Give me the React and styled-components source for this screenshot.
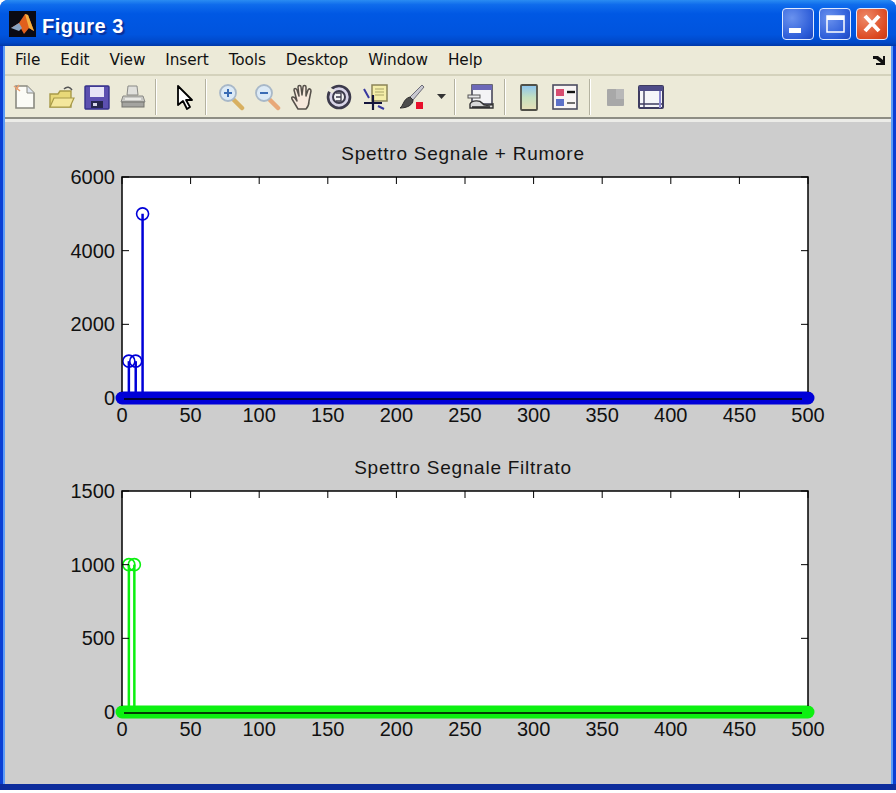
import React from "react";
import styled, { createGlobalStyle } from "styled-components";

const GlobalStyle = createGlobalStyle`
  html, body { margin: 0; padding: 0; background: #fff; }
  body { font-family: "Liberation Sans", Arial, sans-serif; }
`;

const Win = styled.div`
  width: 896px;
  height: 790px;
  display: flex;
  flex-direction: column;
  box-sizing: border-box;
  background: #0a3fd4;
  border-radius: 8px 8px 0 0;
  border-bottom: 6px solid #0c2c9c;
  overflow: hidden;
`;

const TitleBar = styled.div`
  height: 46px;
  flex: none;
  display: flex;
  align-items: center;
  padding: 2px 8px 0 9px;
  box-sizing: border-box;
  background: linear-gradient(180deg, #2a8cf2 0%, #0f6cec 10%, #0058e4 30%, #0054de 75%, #0048c8 92%, #0038a8 100%);
`;

const TitleText = styled.span`
  margin: 4px 0 0 6px;
  color: #fff;
  font-weight: 700;
  font-size: 20px;
  letter-spacing: 0.5px;
  text-shadow: 2px 2px 1px #0a2f98;
`;

const WinButtons = styled.div`
  margin-left: auto;
  display: flex;
  gap: 5px;
`;

const WinButton = styled.div`
  width: 32px;
  height: 32px;
  box-sizing: border-box;
  border: 1px solid #dfeaff;
  border-radius: 4px;
  display: flex;
  align-items: center;
  justify-content: center;
  background: ${(props) =>
    props.$close
      ? "radial-gradient(circle at 30% 30%, #ee8a68, #dc4a22 70%, #c83a18)"
      : "radial-gradient(circle at 30% 30%, #6a92ee, #2c5cd8 70%, #1c46c0)"};
`;

const Client = styled.div`
  flex: 1;
  min-height: 0;
  margin: 0 3px;
  display: flex;
  flex-direction: column;
  background: #cdcdcd;
  border-left: 2px solid #5c9cf8;
  border-right: 2px solid #5c9cf8;
`;

const MenuBar = styled.div`
  height: 30px;
  flex: none;
  box-sizing: border-box;
  display: flex;
  align-items: center;
  padding-left: 10px;
  gap: 20px;
  background: #ecead8;
  border-bottom: 2px solid #d4d2bc;
`;

const MenuItem = styled.span`
  font-family: "DejaVu Sans", sans-serif;
  font-size: 15.3px;
  letter-spacing: -0.1px;
  color: #111;
`;

const DockArrow = styled.span`
  margin-left: auto;
  margin-right: 6px;
  display: flex;
`;

const Toolbar = styled.div`
  height: 43px;
  flex: none;
  box-sizing: border-box;
  display: flex;
  align-items: center;
  padding-left: 2px;
  background: #ecead8;
  border-bottom: 2px solid #8e8e84;
`;

const ToolButton = styled.div`
  width: ${(props) => props.$w || 36}px;
  height: 36px;
  flex: none;
  display: flex;
  align-items: center;
  justify-content: center;
`;

const Separator = styled.div`
  width: 2px;
  height: 36px;
  flex: none;
  margin: 0 ${(props) => props.$r}px 0 ${(props) => props.$l}px;
  background: #b4b2a0;
  border-right: 1px solid #fff;
  box-sizing: border-box;
`;

const Figure = styled.div`
  flex: 1;
  display: flex;
  flex-direction: column;
  gap: 20px;
  padding-top: 21px;
  border-top: 3px solid #ecece8;
`;

const Plot = styled.div`
  display: flex;
  flex-direction: column;
`;

const PlotTitle = styled.div`
  height: 22px;
  line-height: 22px;
  padding-left: 115px;
  width: 686px;
  text-align: center;
  font-size: 19px;
  letter-spacing: 0.75px;
  color: #151515;
`;

const TickLabel = styled.text`
  font-family: "Liberation Sans", Arial, sans-serif;
  font-size: 20px;
  fill: #111;
`;

/* chart */
const AX = { left: 117, width: 686, top: 12, height: 221 };

const Axes = ({ color, yMax, yTicks, peaks }) => {
  const px = (v) => AX.left + (v / 500) * AX.width;
  const py = (v) => AX.top + AX.height - (v / yMax) * AX.height;
  const xTicks = [0, 50, 100, 150, 200, 250, 300, 350, 400, 450, 500];
  const right = AX.left + AX.width;
  const bottom = AX.top + AX.height;
  return (
    <svg width="886" height="272" style={{ display: "block" }}>
      <rect x={AX.left} y={AX.top} width={AX.width} height={AX.height} fill="#fff" />
      {peaks.map(([x, y]) => (
        <g key={x}>
          <line x1={px(x)} x2={px(x)} y1={py(y)} y2={bottom} stroke={color} strokeWidth="2.5" />
          <circle cx={px(x)} cy={py(y)} r="6" fill="none" stroke={color} strokeWidth="1.6" />
        </g>
      ))}
      {/* the 500 markers at zero overlap into one solid band */}
      <line x1={AX.left} x2={right} y1={bottom} y2={bottom} stroke={color} strokeWidth="13" strokeLinecap="round" />
      <path d={`M${AX.left} ${bottom - 6}V${AX.top}H${right}V${bottom - 6}`} fill="none" stroke="#000" strokeWidth="1.5" />
      <line x1={AX.left + 2} x2={right - 6} y1={bottom + 1} y2={bottom + 1} stroke="#000" strokeWidth="1.5" />
      {xTicks.map((t) => (
        <g key={t}>
          <line x1={px(t)} x2={px(t)} y1={AX.top} y2={AX.top + 7} stroke="#000" />
          <TickLabel x={px(t)} y={bottom + 24} textAnchor="middle">{t}</TickLabel>
        </g>
      ))}
      {yTicks.map((t) => (
        <g key={t}>
          {t > 0 && <line x1={AX.left} x2={AX.left + 7} y1={py(t)} y2={py(t)} stroke="#000" />}
          {t > 0 && <line x1={right} x2={right - 7} y1={py(t)} y2={py(t)} stroke="#000" />}
          <TickLabel x={AX.left - 7} y={py(t) + 7} textAnchor="end">{t}</TickLabel>
        </g>
      ))}
    </svg>
  );
};

/* icons */
const Ico = ({ children, w = 28, h = 28 }) => (
  <svg width={w} height={h} viewBox="0 0 28 28">{children}</svg>
);

const MatlabLogo = () => (
  <svg width="27" height="26" viewBox="0 0 27 26">
    <rect width="27" height="26" fill="#0a0a14" />
    <path d="M2 17l8-5 6-9 3 1 6 16-5-3-5 6-4-7z" fill="#e0601c" />
    <path d="M2 17l8-5 3 5-3 3z" fill="#8aa4c4" />
    <path d="M16 3l3 1 6 16-5-3z" fill="#f4b040" />
  </svg>
);

const NewIcon = () => (
  <Ico>
    <path d="M5 3h11l7 7v15H5z" fill="#fbfbf6" stroke="#8a8a80" strokeWidth="1.6" />
    <path d="M16 3v7h7" fill="#dfe6f0" stroke="#8a8a80" />
    <path d="M3 3l6 5M8 2l-3 5" stroke="#e8a070" strokeWidth="1.5" />
  </Ico>
);

const OpenIcon = () => (
  <Ico>
    <path d="M3 11h8l2-3h11v16H3z" fill="#e8d878" stroke="#a89a48" strokeWidth="1.4" />
    <path d="M3 24l4-9h20l-4 9z" fill="#f4e79c" stroke="#a89a48" strokeWidth="1.2" />
    <path d="M17 6c3-3 6-2 8 1" fill="none" stroke="#555" strokeWidth="1.5" />
  </Ico>
);

const SaveIcon = () => (
  <Ico>
    <rect x="2" y="3" width="24" height="23" rx="1" fill="#5c50b0" stroke="#34308a" strokeWidth="1.4" />
    <rect x="7" y="4" width="14" height="10" fill="#e6e4f6" />
    <rect x="8" y="18" width="12" height="7" fill="#26264c" />
    <rect x="10" y="20" width="4" height="3" fill="#d8d8e8" />
  </Ico>
);

const PrintIcon = () => (
  <Ico>
    <path d="M9 3h9l1 9H8z" fill="#e0e0dc" stroke="#8a8a86" />
    <path d="M4 13h20l2 6H2z" fill="#c8c8c4" stroke="#8a8a86" />
    <rect x="3" y="19" width="22" height="5" fill="#a4a4a0" stroke="#74746f" />
    <path d="M6 16h16" stroke="#f4f4f0" strokeWidth="1.5" />
  </Ico>
);

const ArrowIcon = () => (
  <Ico>
    <path d="M8 3v19l5-4 4 8 3-2-4-7h6z" fill="#fff" stroke="#000" strokeWidth="1.8" strokeLinejoin="round" />
  </Ico>
);

const ZoomIcon = ({ minus }) => (
  <Ico>
    <path d="M16 16l9 9" stroke={minus ? "#e8a878" : "#d8b060"} strokeWidth="4.5" strokeLinecap="round" />
    <circle cx="11" cy="10" r="8" fill="#dceaf6" stroke="#a8b8c8" strokeWidth="1.8" />
    <path d={minus ? "M7 10h8" : "M7 10h8M11 6v8"} stroke="#3a6cb4" strokeWidth="2" />
  </Ico>
);

const HandIcon = () => (
  <Ico>
    <path
      d="M9 26l-6-10c-1-2 1-3 3-1l2 3-3-11c0-2 2-2 3 0l2 6-1-9c0-2 3-2 3 0l1 8 1-8c0-2 3-2 3 0l0 9 2-6c1-2 3-1 3 1l-2 10c0 4-2 7-3 8z"
      fill="#f6e8dc"
      stroke="#55504a"
      strokeWidth="1.5"
      strokeLinejoin="round"
    />
  </Ico>
);

const RotateIcon = () => (
  <Ico>
    <circle cx="14" cy="14" r="11" fill="#d8d4e8" stroke="#3c3a4c" strokeWidth="2.6" />
    <path d="M2 5l7 4" stroke="#eceadc" strokeWidth="4" />
    <circle cx="14" cy="14" r="6" fill="#f4f4f4" stroke="#3c3a4c" strokeWidth="2" />
    <path d="M11 10h5v8h-5M11 14h5" fill="none" stroke="#3c3a4c" strokeWidth="1.3" />
  </Ico>
);

const CursorIcon = () => (
  <Ico>
    <rect x="11" y="2" width="15" height="16" fill="#f4eda8" stroke="#8a8458" strokeWidth="1.5" />
    <path d="M14 6h9M14 9h9M14 12h9" stroke="#a8a468" />
    <path d="M12 12v15M3 20h18" stroke="#14143c" strokeWidth="2.2" />
    <path d="M3 6l5 9M17 23l6 3" stroke="#3838a0" strokeWidth="2" />
  </Ico>
);

const BrushIcon = () => (
  <Ico>
    <path d="M25 2l2 2-11 13-3-3z" fill="#c8c8d0" stroke="#6c6c78" />
    <path d="M13 14l3 3c0 5-6 8-13 8 4-3 3-9 10-11z" fill="#4c4c4c" stroke="#2c2c2c" />
    <rect x="19" y="19" width="7" height="7" fill="#e8102c" />
  </Ico>
);

const DropIcon = () => (
  <svg width="9" height="5" viewBox="0 0 9 5">
    <path d="M0 0h9L4.500 5z" fill="#333" />
  </svg>
);

const LinkedIcon = () => (
  <Ico>
    <rect x="5" y="2" width="20" height="19" fill="#f4f4f6" stroke="#3c3c50" strokeWidth="1.5" />
    <rect x="5" y="2" width="20" height="5" fill="#6c68b8" />
    <rect x="1" y="12" width="12" height="3" fill="#e8e8ea" stroke="#555" />
    <path d="M3 21c2-4 10-4 12-1s8 2 11 1v4H3z" fill="#d8d8d8" stroke="#333" strokeWidth="1.4" />
    <path d="M5 24h18" stroke="#222" strokeWidth="1.5" />
  </Ico>
);

const ColorbarIcon = () => (
  <Ico>
    <defs>
      <linearGradient id="cbar" x1="0" x2="0" y1="0" y2="1">
        <stop offset="0" stopColor="#8cc4f0" />
        <stop offset="0.5" stopColor="#c4e0c0" />
        <stop offset="1" stopColor="#e8e0b8" />
      </linearGradient>
    </defs>
    <rect x="6" y="2" width="16" height="25" rx="1" fill="url(#cbar)" stroke="#505048" strokeWidth="1.8" />
  </Ico>
);

const LegendIcon = () => (
  <Ico>
    <rect x="2" y="2" width="24" height="24" fill="#f8f4f4" stroke="#4c4c60" strokeWidth="1.6" />
    <rect x="5" y="6" width="8" height="7" fill="#d84c70" />
    <rect x="5" y="16" width="8" height="7" fill="#5c70c8" />
    <path d="M16 9h8" stroke="#111" strokeWidth="2.4" />
    <path d="M16 20h8" stroke="#333" strokeWidth="1.4" />
  </Ico>
);

const HideIcon = () => (
  <Ico>
    <rect x="6" y="6" width="17" height="17" rx="1" fill="#a8a8a8" />
    <path d="M15 6h8v10h-8z" fill="#b8b8b8" />
  </Ico>
);

const PlotToolsIcon = () => (
  <Ico>
    <rect x="2" y="3" width="24" height="22" rx="1" fill="#f6f6fa" stroke="#3e3c60" strokeWidth="2" />
    <rect x="2" y="3" width="24" height="5" fill="#4e4c88" />
    <path d="M7 8v17M2 21h24" stroke="#3e3c60" strokeWidth="1.4" />
    <path d="M23 8v17" stroke="#8c88d0" strokeWidth="2" />
  </Ico>
);

const menus = ["File", "Edit", "View", "Insert", "Tools", "Desktop", "Window", "Help"];

const App = () => (
  <>
    <GlobalStyle />
    <Win>
      <TitleBar>
        <MatlabLogo />
        <TitleText>Figure 3</TitleText>
        <WinButtons>
          <WinButton>
            <svg width="30" height="30" viewBox="0 0 30 30">
              <rect x="6" y="19" width="12" height="5" fill="#fff" />
            </svg>
          </WinButton>
          <WinButton>
            <svg width="30" height="30" viewBox="0 0 30 30">
              <rect x="7" y="7" width="17" height="16" fill="none" stroke="#fff" strokeWidth="1.5" />
              <rect x="7" y="7" width="17" height="4" fill="#fff" />
            </svg>
          </WinButton>
          <WinButton $close>
            <svg width="30" height="30" viewBox="0 0 30 30">
              <path d="M8 7l14 15M22 7L8 22" stroke="#fff" strokeWidth="4" />
            </svg>
          </WinButton>
        </WinButtons>
      </TitleBar>
      <Client>
        <MenuBar>
          {menus.map((m) => (
            <MenuItem key={m}>{m}</MenuItem>
          ))}
          <DockArrow>
            <svg width="12" height="10" viewBox="0 0 12 10">
              <path d="M0 1h5l5 4V1h2v9H3V8h5L3 4H0z" fill="#111" />
            </svg>
          </DockArrow>
        </MenuBar>
        <Toolbar>
          <ToolButton><NewIcon /></ToolButton>
          <ToolButton><OpenIcon /></ToolButton>
          <ToolButton><SaveIcon /></ToolButton>
          <ToolButton><PrintIcon /></ToolButton>
          <Separator $l={4} $r={9} />
          <ToolButton><ArrowIcon /></ToolButton>
          <Separator $l={3} $r={6} />
          <ToolButton><ZoomIcon /></ToolButton>
          <ToolButton><ZoomIcon minus /></ToolButton>
          <ToolButton><HandIcon /></ToolButton>
          <ToolButton><RotateIcon /></ToolButton>
          <ToolButton><CursorIcon /></ToolButton>
          <ToolButton><BrushIcon /></ToolButton>
          <ToolButton $w={24}><DropIcon /></ToolButton>
          <Separator $l={1} $r={7} />
          <ToolButton><LinkedIcon /></ToolButton>
          <Separator $l={5} $r={5} />
          <ToolButton><ColorbarIcon /></ToolButton>
          <ToolButton><LegendIcon /></ToolButton>
          <Separator $l={6} $r={6} />
          <ToolButton><HideIcon /></ToolButton>
          <ToolButton><PlotToolsIcon /></ToolButton>
        </Toolbar>
        <Figure>
          <Plot>
            <PlotTitle>Spettro Segnale + Rumore</PlotTitle>
            <Axes color="#0000d8" yMax={6000} yTicks={[0, 2000, 4000, 6000]} peaks={[[5, 1000], [10, 1000], [15, 5000]]} />
          </Plot>
          <Plot>
            <PlotTitle>Spettro Segnale Filtrato</PlotTitle>
            <Axes color="#0cf010" yMax={1500} yTicks={[0, 500, 1000, 1500]} peaks={[[5, 1000], [9, 1000]]} />
          </Plot>
        </Figure>
      </Client>
    </Win>
  </>
);

export default App;
